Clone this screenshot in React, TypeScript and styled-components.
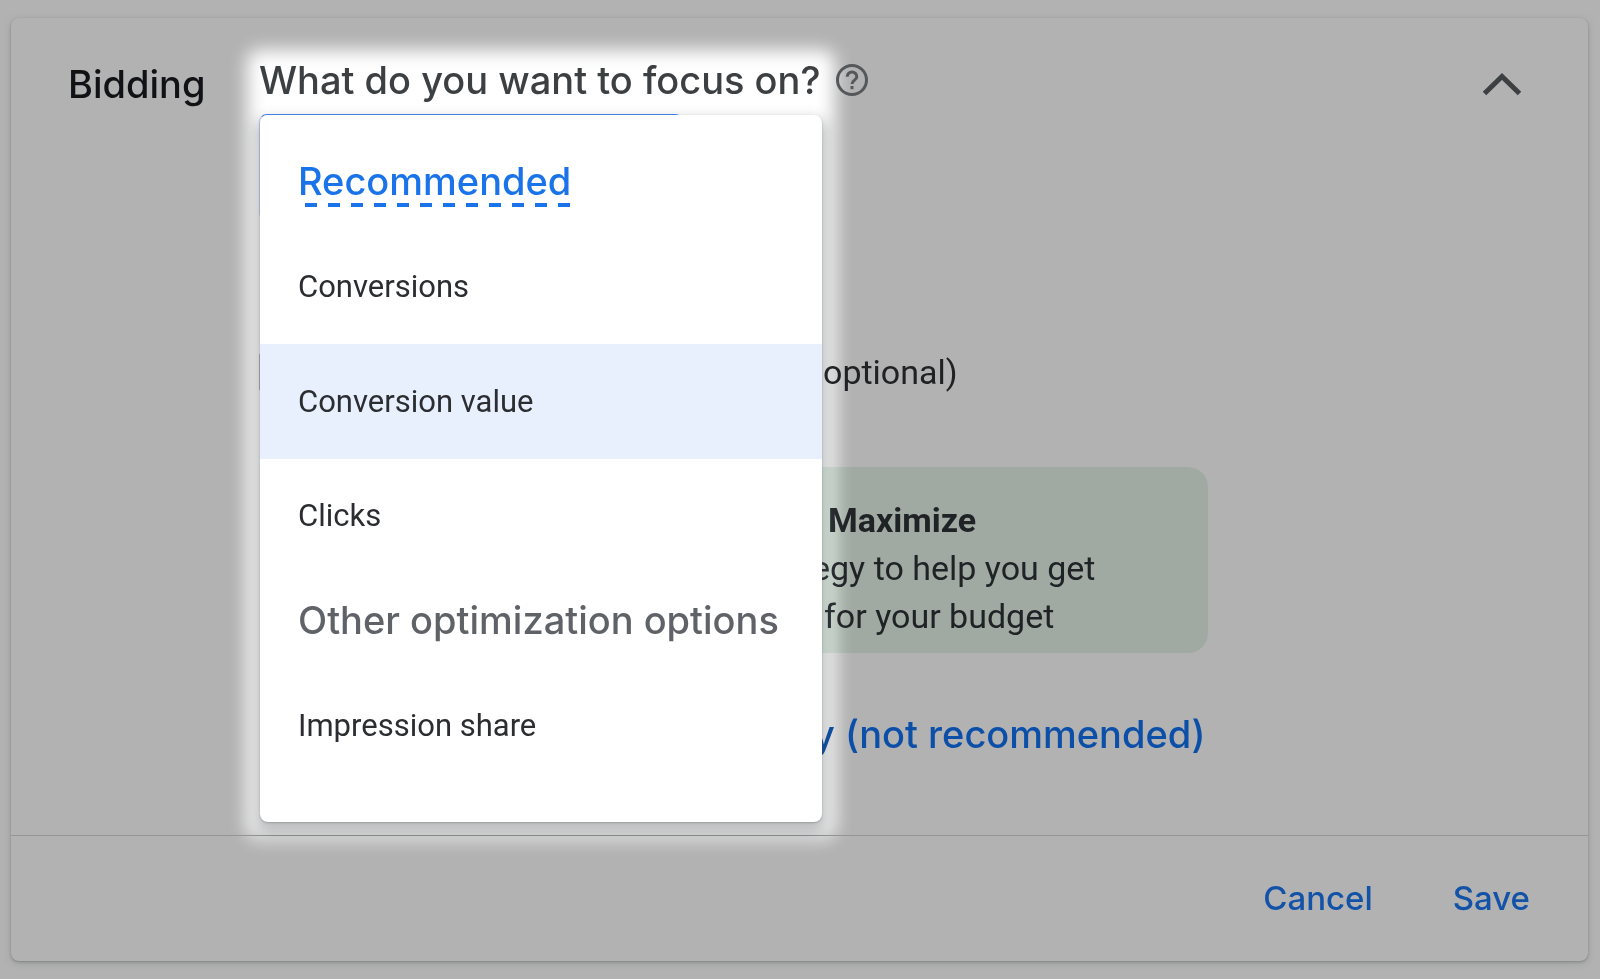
import React from "react";
import styled, { createGlobalStyle } from "styled-components";

const display = `Inter, "Liberation Sans", sans-serif`;
const text = `Roboto, "Liberation Sans", sans-serif`;

const GlobalStyle = createGlobalStyle`
  *, *::before, *::after { box-sizing: border-box; }
  body { margin: 0; background: #b2b2b2; font-family: ${text}; color: #202124; }
  h2, h3, p, ul { margin: 0; padding: 0; font-weight: inherit; }
  ul { list-style: none; }
`;

const Page = styled.main`
  min-height: 100vh;
  display: flex;
  padding: 18px 12px 18px 11px;
`;

const Card = styled.section`
  flex: 1;
  display: flex;
  flex-direction: column;
  border-radius: 8px;
  background: #b2b2b2;
  box-shadow: 0 1px 2px #858887, 0 2px 7px #959998;
`;

const Body = styled.div`
  flex: 1;
  display: grid;
  grid-template-columns: 191px minmax(0, 1fr) 40px;
  padding: 38px 66px 56px 57px;
`;

const SectionTitle = styled.h2`
  padding-top: 4px;
  font: 500 38px/48px ${display};
  color: #101216;
`;

const PlainButton = styled.button`
  display: flex;
  padding: 0;
  border: 0;
  background: none;
  color: inherit;
  cursor: pointer;
`;

const Collapse = styled(PlainButton)`
  height: 24px;
  margin-top: 16px;
  color: #3c4043;
`;

const Content = styled.div`
  position: relative;
`;

const Glow = styled.div`
  position: absolute;
  top: -6px;
  left: -12px;
  width: 588px;
  height: 788px;
  border-radius: 12px;
  background: #fff;
  filter: blur(9px);
`;

const QuestionRow = styled.div`
  position: relative;
  display: flex;
  align-items: center;
  gap: 16px;
  height: 48px;
`;

const Question = styled.h3`
  font: 500 38px/48px ${display};
  color: #3c4043;
  white-space: nowrap;
`;

const HelpButton = styled(PlainButton)`
  color: #55585b;
`;

const Field = styled.div`
  position: relative;
  margin-top: 10px;
`;

const SelectBox = styled.button`
  display: block;
  width: 424px;
  height: 107px;
  border: 1px solid #4285f4;
  border-left-color: #c4d9fa;
  border-radius: 8px;
  background: #fff;
`;

const Menu = styled.div`
  position: absolute;
  z-index: 1;
  top: 1px;
  left: 1px;
  width: 562px;
  padding-bottom: 39px;
  border-radius: 8px;
  background: #fff;
  box-shadow: 0 1px 2px rgba(60, 64, 67, 0.3), 0 8px 14px 4px rgba(60, 64, 67, 0.32);
`;

const MenuHeading = styled.div<{ $first?: boolean }>`
  display: flex;
  align-items: center;
  height: ${(p) => (p.$first ? 115 : 96)}px;
  padding: ${(p) => (p.$first ? "16px 38px 0" : "0 38px 2px")};
  font: 500 38px/48px ${display};
  color: #5f6368;
  white-space: nowrap;
`;

const DashedTerm = styled.span`
  position: relative;
  color: #1a73e8;

  &::after {
    content: "";
    position: absolute;
    left: 7px;
    right: 0;
    bottom: -2px;
    height: 4px;
    background: repeating-linear-gradient(90deg, #1a73e8 0 12px, transparent 12px 23px);
  }
`;

const Option = styled.button<{ $active?: boolean }>`
  display: block;
  width: 100%;
  height: ${(p) => (p.$active ? 115 : 114)}px;
  padding: 0 38px;
  border: 0;
  background: ${(p) => (p.$active ? "#e8f0fe" : "transparent")};
  font: 400 31px/40px ${text};
  color: #2b2d30;
  text-align: left;
  cursor: pointer;
`;

const TargetRow = styled.label`
  position: relative;
  display: flex;
  align-items: center;
  gap: 528px;
  height: 48px;
  margin-top: 127px;
  font: 400 34px/48px ${text};
`;

const TickBox = styled.input`
  appearance: none;
  flex: none;
  width: 36px;
  height: 36px;
  margin: 0;
  border: 1px solid #b4b6b5;
`;

const Tip = styled.div`
  position: relative;
  width: 945px;
  margin: 71px 0 0 4px;
  padding: 29px 0 13px 549px;
  border-radius: 20px;
  background: #e6f4ea;
  mix-blend-mode: multiply;
  font: 400 34px/48px ${text};
  color: #2e3136;
`;

const TipLine = styled.p<{ $indent?: number }>`
  padding-left: ${(p) => p.$indent ?? 0}px;
  white-space: nowrap;
`;

const StrategyLink = styled.a`
  position: relative;
  display: block;
  margin-top: 57px;
  padding-left: 554px;
  font: 500 38px/48px ${display};
  color: #0b4fa8;
  text-decoration: none;
  white-space: nowrap;
`;

const Footer = styled.footer`
  position: relative;
  display: flex;
  justify-content: flex-end;
  align-items: center;
  gap: 80px;
  height: 126px;
  padding: 0 58px 2px;
  border-top: 1px solid #949696;
`;

const TextButton = styled(PlainButton)`
  font: 500 33px/48px ${display};
  color: #1253a8;
`;

export default function App() {
  return (
    <Page>
      <GlobalStyle />
      <Card>
        <Body>
          <SectionTitle>Bidding</SectionTitle>
          <Content>
            <Glow />
            <QuestionRow>
              <Question id="focus-question">What do you want to focus on?</Question>
              <HelpButton aria-label="Help">
                <svg width="32" height="32" viewBox="0 0 32 32" fill="none" stroke="currentColor" strokeWidth="3">
                  <circle cx="16" cy="16" r="14.5" />
                  <path d="M11.200 12.800a4.800 4.800 0 1 1 9.600 0c0 3.200-4.800 3.600-4.800 7.200" />
                  <path d="M16 22v3.200" />
                </svg>
              </HelpButton>
            </QuestionRow>
            <Field>
              <SelectBox aria-labelledby="focus-question" aria-haspopup="true" aria-expanded="true" />
              <Menu>
                <MenuHeading $first>
                  <DashedTerm>Recommended</DashedTerm>
                </MenuHeading>
                <ul>
                  <li><Option>Conversions</Option></li>
                  <li><Option $active>Conversion value</Option></li>
                  <li><Option>Clicks</Option></li>
                </ul>
                <MenuHeading>Other optimization options</MenuHeading>
                <ul>
                  <li><Option>Impression share</Option></li>
                </ul>
              </Menu>
            </Field>
            <TargetRow>
              <TickBox type="checkbox" />
              optional)
            </TargetRow>
            <Tip>
              <TipLine $indent={16}><b>Maximize</b></TipLine>
              <TipLine>egy to help you get</TipLine>
              <TipLine $indent={12}>for your budget</TipLine>
            </Tip>
            <StrategyLink href="#strategy">y (not recommended)</StrategyLink>
          </Content>
          <Collapse aria-label="Collapse bidding">
            <svg width="40" height="24" viewBox="0 0 40 24" fill="none" stroke="currentColor" strokeWidth="5">
              <path d="M2.500 21.500L20 4.500L37.500 21.500" />
            </svg>
          </Collapse>
        </Body>
        <Footer>
          <TextButton>Cancel</TextButton>
          <TextButton>Save</TextButton>
        </Footer>
      </Card>
    </Page>
  );
}
